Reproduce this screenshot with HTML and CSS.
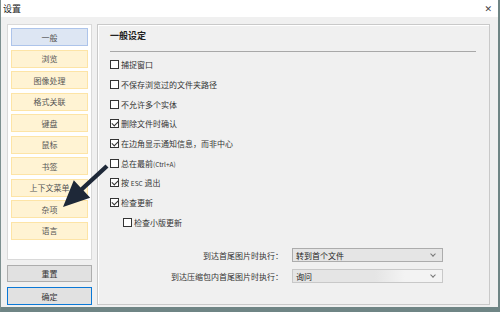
FILE: index.html
```html
<!DOCTYPE html>
<html lang="zh-CN">
<head>
  <meta charset="UTF-8">
  <title>设置</title>
  <link rel="stylesheet" href="styles.css">
</head>
<body>
  <div class="window">
    <!-- Title bar -->
    <div class="titlebar">
      <span class="title">设置</span>
      <span class="close">✕</span>
    </div>

    <div class="content">
      <!-- Left navigation -->
      <div class="side">
        <div class="nav">
          <div class="nav-item active">一般</div>
          <div class="nav-item">浏览</div>
          <div class="nav-item">图像处理</div>
          <div class="nav-item">格式关联</div>
          <div class="nav-item">键盘</div>
          <div class="nav-item">鼠标</div>
          <div class="nav-item">书签</div>
          <div class="nav-item">上下文菜单</div>
          <div class="nav-item">杂项</div>
          <div class="nav-item">语言</div>
        </div>
        <button class="btn">重置</button>
        <button class="btn primary">确定</button>
      </div>

      <!-- Settings panel -->
      <div class="panel">
        <h2 class="panel-title">一般设定</h2>
        <div class="sep"></div>

        <div class="checks">
          <label class="check"><span class="box"></span><span>捕捉窗口</span></label>
          <label class="check"><span class="box"></span><span>不保存浏览过的文件夹路径</span></label>
          <label class="check"><span class="box"></span><span>不允许多个实体</span></label>
          <label class="check"><span class="box on"></span><span>删除文件时确认</span></label>
          <label class="check"><span class="box on"></span><span>在边角显示通知信息，而非中心</span></label>
          <label class="check"><span class="box"></span><span>总在最前<span class="small">(Ctrl+A)</span></span></label>
          <label class="check"><span class="box on"></span><span>按 <span class="small">ESC</span> 退出</span></label>
          <label class="check"><span class="box on"></span><span>检查更新</span></label>
          <label class="check sub"><span class="box"></span><span>检查小版更新</span></label>
        </div>

        <div class="selects">
          <div class="select-row">
            <span class="select-label">到达首尾图片时执行：</span>
            <div class="select">转到首个文件<span class="chev"></span></div>
          </div>
          <div class="select-row">
            <span class="select-label">到达压缩包内首尾图片时执行：</span>
            <div class="select faded">询问<span class="chev"></span></div>
          </div>
        </div>
      </div>
    </div>

    <!-- Annotation arrow -->
    <svg class="arrow" width="500" height="312" viewBox="0 0 500 312">
      <polygon points="105.5,164.4 80.5,187.4 73.8,180.2 63,207 90.2,197.8 83.5,190.6 108.5,167.6" fill="#1e2838"/>
    </svg>
  </div>
</body>
</html>
```

FILE: styles.css
```css
/* Reset default styles */
* {
  margin: 0;
  padding: 0;
  box-sizing: border-box;
  font-family: "Noto Sans CJK SC", "Liberation Sans", sans-serif;
}

body {
  width: 500px;
  height: 312px;
  overflow: hidden;
  background: #f0f0f0;
}

.window {
  position: relative;
  width: 500px;
  height: 312px;
  background: #f0f0f0;
  border-left: 1px solid #7d9090;
  border-right: 2px solid #6f8585;
  border-bottom: 5px solid #6f8585;
  display: flex;
  flex-direction: column;
}

/* Title bar */
.titlebar {
  flex-shrink: 0;
  height: 17px;
  background: #fff;
  display: flex;
  align-items: center;
  justify-content: space-between;
  padding: 0 6px 0 2px;
}

.title {
  font-size: 9px;
  color: #222;
}

.close {
  font-size: 9px;
  color: #444;
  font-family: "DejaVu Sans", sans-serif;
}

.content {
  flex: 1;
  min-height: 0;
  display: flex;
  padding: 7px 8px 2px 6px;
  gap: 5px;
}

/* Left side */
.side {
  width: 85px;
  display: flex;
  flex-direction: column;
}

.nav {
  flex-shrink: 0;
  height: 236px;
  background: #fff;
  border: 1px solid #d9d9d9;
  padding: 3px 3px 0 3px;
  display: flex;
  flex-direction: column;
  gap: 3.5px;
  margin-bottom: 5px;
}

.nav-item {
  flex-shrink: 0;
  height: 18px;
  background: #fff3d3;
  border: 1px solid #fde4a6;
  color: #555;
  font-size: 8px;
  display: flex;
  align-items: center;
  justify-content: center;
}

.nav-item.active {
  background: #dde6f3;
  border-color: #adc4ea;
}

.btn {
  flex-shrink: 0;
  height: 17px;
  background: #e1e1e1;
  border: 1px solid #adadad;
  color: #333;
  font-size: 8px;
  margin-bottom: 5px;
}

.btn.primary {
  height: 18px;
  margin-bottom: 0;
  border: 1.5px solid #0a78d6;
}

/* Right panel */
.panel {
  flex: 1;
  border: 1px solid #c9c9c9;
  box-shadow: inset 1px 1px 0 #fff;
  padding: 5px 13px 0 12px;
  display: flex;
  flex-direction: column;
}

.panel-title {
  font-size: 9px;
  font-weight: bold;
  color: #222;
  line-height: 12px;
}

.sep {
  height: 1px;
  background: #a8a8a8;
  margin-top: 9px;
}

.checks {
  margin-top: 3px;
  display: flex;
  flex-direction: column;
}

.check {
  height: 19.7px;
  display: flex;
  align-items: center;
  font-size: 8px;
  color: #333;
}

.check.sub {
  padding-left: 13px;
}

.box {
  flex-shrink: 0;
  width: 9px;
  height: 9px;
  border: 1px solid #333;
  background: #fff;
  margin-right: 2px;
  position: relative;
}

.box.on::after {
  content: "";
  position: absolute;
  left: 2px;
  top: 0px;
  width: 3px;
  height: 5px;
  border: solid #333;
  border-width: 0 1px 1px 0;
  transform: rotate(45deg);
}

.small {
  font-size: 6.5px;
}

.selects {
  margin-top: 16px;
  display: flex;
  flex-direction: column;
  gap: 7px;
}

.select-row {
  display: flex;
  align-items: center;
  height: 14px;
}

.select-label {
  width: 182px;
  text-align: right;
  font-size: 8px;
  color: #333;
  padding-right: 9px;
}

.select {
  width: 151px;
  height: 14px;
  background: #e5e5e5;
  border: 1px solid #acacac;
  font-size: 8px;
  color: #222;
  padding-left: 3px;
  display: flex;
  align-items: center;
  justify-content: space-between;
}

.select.faded {
  background: linear-gradient(90deg, #e5e5e5 55%, #f3f3f3 75%);
  border-color: #c8c8c8;
}

.chev {
  width: 4px;
  height: 4px;
  border: solid #777;
  border-width: 0 1px 1px 0;
  transform: rotate(45deg);
  margin: 0 7px 2px 0;
}

/* Overlay arrow */
.arrow {
  position: absolute;
  left: -1px;
  top: 0;
  pointer-events: none;
}
```
